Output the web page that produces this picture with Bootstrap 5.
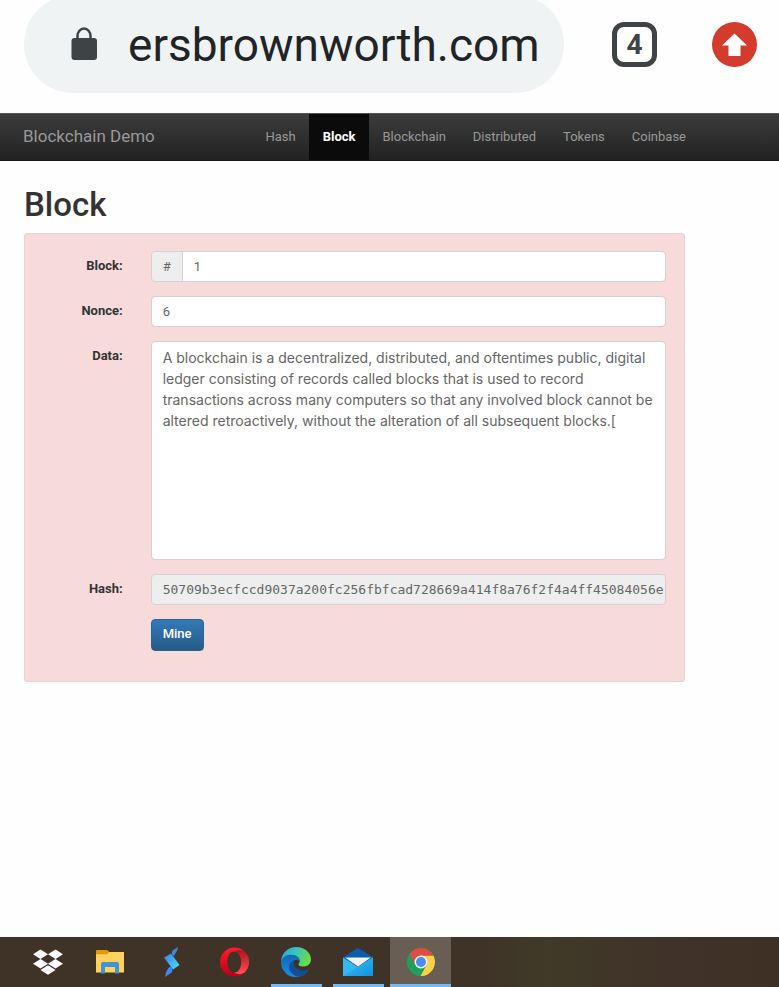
<!DOCTYPE html>
<html lang="en">
<head>
<meta charset="utf-8">
<meta name="viewport" content="width=device-width, initial-scale=1">
<title>Blockchain Demo</title>
<link href="https://cdn.jsdelivr.net/npm/bootstrap@5.3.0/dist/css/bootstrap.min.css" rel="stylesheet">
<style>
  body { font-family: Roboto, sans-serif; font-size: 13px; line-height: 20px; color: #333; background: #fefefe; }
  a { text-decoration: none; }

  /* browser bar */
  .browser-bar { height: 113px; padding: 0 22px 0 24px; }
  .address { flex: 0 1 540px; min-width: 0; height: 98px; margin-top: -5px; padding: 0 20px 0 46px; gap: 30px; background: #eff3f4; border-radius: 49px; }
  .address input { width: 0; min-width: 0; padding: 2px 0 0; border: 0; background: transparent; color: #202427; font-size: 46px; line-height: 58px; }
  .bar-actions { height: 88px; gap: 55px; }
  .tab-count { width: 45px; height: 45px; border: 5px solid #3e4346; border-radius: 12px; background: #fff; color: #3e4346; font-size: 28px; font-weight: 700; line-height: 35px; }

  /* site navigation */
  .site-nav { height: 48px; padding: 0 80px 0 23px; background: linear-gradient(#3c3c3c, #222); border-top: 1px solid #555; border-bottom: 1px solid #181818; }
  .site-nav .navbar-brand { color: #999; font-size: 17px; line-height: 22px; padding-bottom: 2px; }
  .site-nav .nav-link { padding: 0 13px 0 14px; line-height: 46px; color: #999; font-size: 13px; }
  .site-nav .nav-link.active { background: #0b0b0b; color: #fff; font-weight: 700; }

  /* block form */
  main { padding: 24px 94px 0 24px; }
  h1 { font-size: 33px; line-height: 40px; font-weight: 500; margin-bottom: 8px; }
  .block-well { padding: 17px 18px 30px 17px; background: #f7dbdb; border: 1px solid #e6d3d3; border-radius: 3px; }
  .block-well .row { --bs-gutter-x: 28px; margin-bottom: 14px; }
  .block-well .col-form-label { padding-top: 5px; padding-bottom: 0; font-size: 13px; font-weight: 700; text-align: right; }
  .block-well .form-control, .block-well .input-group-text { padding: 5px 11px; border-color: #dccfcf; border-radius: 4px; color: #666; font-size: 13px; line-height: 19px; }
  .block-well .input-group-text { background: #eee; }
  .block-well .input-group > :first-child { border-radius: 4px 0 0 4px; }
  .block-well .input-group > :last-child { border-radius: 0 4px 4px 0; }
  .block-well textarea.form-control { display: block; height: 219px; padding-right: 4px; font-family: Inter, sans-serif; font-size: 14px; line-height: 21px; resize: none; }
  .block-well .hash-value { padding-right: 1px; background: #eee; font-family: "DejaVu Sans Mono", monospace; }
  .btn-mine { padding: 4px 11px 6px; border: 1px solid #2d6390; border-radius: 4px; background: linear-gradient(#337ab7, #265a88); color: #fff; font-size: 13px; font-weight: 500; }

  /* taskbar */
  .taskbar { height: 50px; padding: 0 17px; background: linear-gradient(90deg, #3f3327 62%, #403a28 70%, #403228 85%, #3f3026); }
  .task { width: 62px; height: 50px; padding: 0; border: 0; background: transparent; }
  .task.running::after { content: ""; position: absolute; left: 6px; right: 5px; bottom: 0; height: 3px; background: #76b9ed; }
  .task.current { width: 61px; margin-left: 1px; background: #685e54; }
  .task.current::after { left: 0; right: 0; }
</style>
</head>
<body class="d-flex flex-column min-vh-100">

<header class="browser-bar d-flex justify-content-between align-items-start overflow-hidden">
  <div class="address d-flex align-items-center">
    <svg width="28" height="34" viewBox="0 0 28 34" class="flex-shrink-0" aria-hidden="true">
      <path d="M7.500 12V9a6.500 7.500 0 0 1 13 0v3" fill="none" stroke="#3e4345" stroke-width="2.500"/>
      <rect x="1.500" y="11" width="25.500" height="22" rx="3" fill="#3e4345"/>
    </svg>
    <input class="flex-grow-1" type="text" value="ersbrownworth.com" aria-label="Address">
  </div>
  <div class="bar-actions d-flex align-items-center">
    <button class="tab-count p-0" type="button" aria-label="4 open tabs">4</button>
    <button class="border-0 bg-transparent p-0 d-flex" type="button" aria-label="Update">
      <svg width="45" height="45" viewBox="0 0 45 45"><circle cx="22.500" cy="22.500" r="22.500" fill="#d33c2d"/><path d="M22.500 11.500 35 23.500h-6.500v10.500h-12V23.500H10z" fill="#fff"/></svg>
    </button>
  </div>
</header>

<nav class="site-nav d-flex justify-content-between">
  <a class="navbar-brand m-0 pt-0 align-self-center" href="#">Blockchain Demo</a>
  <ul class="nav flex-nowrap">
    <li class="nav-item"><a class="nav-link" href="#">Hash</a></li>
    <li class="nav-item"><a class="nav-link active" aria-current="page" href="#">Block</a></li>
    <li class="nav-item"><a class="nav-link" href="#">Blockchain</a></li>
    <li class="nav-item"><a class="nav-link" href="#">Distributed</a></li>
    <li class="nav-item"><a class="nav-link" href="#">Tokens</a></li>
    <li class="nav-item"><a class="nav-link" href="#">Coinbase</a></li>
  </ul>
</nav>

<main class="flex-grow-1">
  <h1>Block</h1>
  <form class="block-well">
    <div class="row">
      <label class="col-2 col-form-label" for="number">Block:</label>
      <div class="col-10">
        <div class="input-group">
          <span class="input-group-text">#</span>
          <input class="form-control" id="number" type="text" value="1">
        </div>
      </div>
    </div>
    <div class="row">
      <label class="col-2 col-form-label" for="nonce">Nonce:</label>
      <div class="col-10"><input class="form-control" id="nonce" type="text" value="6"></div>
    </div>
    <div class="row">
      <label class="col-2 col-form-label" for="data">Data:</label>
      <div class="col-10"><textarea class="form-control" id="data">A blockchain is a decentralized, distributed, and oftentimes public, digital ledger consisting of records called blocks that is used to record transactions across many computers so that any involved block cannot be altered retroactively, without the alteration of all subsequent blocks.[</textarea></div>
    </div>
    <div class="row">
      <label class="col-2 col-form-label" for="hash">Hash:</label>
      <div class="col-10"><input class="form-control hash-value" id="hash" type="text" readonly value="50709b3ecfccd9037a200fc256fbfcad728669a414f8a76f2f4a4ff45084056e"></div>
    </div>
    <div class="row mb-0">
      <div class="col-10 offset-2"><button class="btn btn-mine" type="button">Mine</button></div>
    </div>
  </form>
</main>

<footer class="taskbar d-flex">
  <button class="task d-flex align-items-center justify-content-center" type="button" aria-label="Dropbox">
    <svg width="30" height="26" viewBox="0 0 30 26" fill="#fff"><path d="M7.500.5 15 5.200 7.500 10 0 5.200zM22.500.5 30 5.200 22.500 10 15 5.200zM7.500 10 15 14.700 7.500 19.500 0 14.700zM22.500 10 30 14.700 22.500 19.500 15 14.700zM15 16.300 22.500 21 15 25.800 7.500 21z"/></svg>
  </button>
  <button class="task d-flex align-items-center justify-content-center" type="button" aria-label="File Explorer">
    <svg width="28" height="24" viewBox="0 0 28 24"><path d="M0 3Q0 2 1 2h27v20.500H0z" fill="#ffd25c"/><path d="M0 1q0-1 1-1h10l2.500 2L11 4.200H0z" fill="#e39a00"/><path d="M5 23.500V14q0-2 2-2h14q2 0 2 2v9.500h-4V17H9v6.500z" fill="#3d94d8"/></svg>
  </button>
  <button class="task d-flex align-items-center justify-content-center" type="button" aria-label="Stream">
    <svg width="16" height="30" viewBox="0 0 16 30"><defs><linearGradient id="bolt" x1="0" y1="0" x2="1" y2="1"><stop stop-color="#3c78f0"/><stop offset="1" stop-color="#42e8f5"/></linearGradient></defs><path d="M14 0 8.500 3.500Q7 6 9 9.500 13 6 14 0z" fill="#3c86dc"/><path d="M0 10.500 7 6.500 15.500 18 9 22.500z" fill="url(#bolt)"/><path d="M1 30 7.500 25.500Q9.500 23 6.500 19.500 2 22 1 30z" fill="#4187f2"/></svg>
  </button>
  <button class="task d-flex align-items-center justify-content-center" type="button" aria-label="Opera">
    <svg width="29" height="30" viewBox="0 0 29 30"><defs><linearGradient id="opera" x1="0" x2="0" y1="0" y2="1"><stop stop-color="#ff1b2d"/><stop offset="1" stop-color="#b80018"/></linearGradient><linearGradient id="operaSide" x1="0" x2="0" y1="0" y2="1"><stop stop-color="#b5101f"/><stop offset="1" stop-color="#ff5054"/></linearGradient></defs><path d="M14.500.5a14.500 14.500 0 1 0 0 29 14.500 14.500 0 0 0 0-29zM14.300 4.500c4.500 0 7 5 7 10.500s-2.500 10.500-7 10.500-7-5-7-10.500 2.500-10.500 7-10.500z" fill="url(#opera)" fill-rule="evenodd"/><path d="M14.300 4.500Q19 2 24 4.200 29 8.500 29 15t-5 11q-5 2.500-9.700-.5c4.500 0 7-5 7-10.500s-2.500-10.500-7-10.500z" fill="url(#operaSide)"/></svg>
  </button>
  <button class="task running position-relative d-flex align-items-center justify-content-center" type="button" aria-label="Edge">
    <svg width="30" height="30" viewBox="0 0 30 30"><defs><linearGradient id="wave" x1="0" x2="1" y1="0" y2=".3"><stop stop-color="#2d9fdf"/><stop offset=".5" stop-color="#35c4c2"/><stop offset="1" stop-color="#65dc4a"/></linearGradient><linearGradient id="sea" x1="0" x2="0" y1="0" y2="1"><stop stop-color="#1267b5"/><stop offset="1" stop-color="#168fe0"/></linearGradient></defs>
      <path d="M0 14C1 5 8 0 15 0c9 0 15 6 15 12.500 0 4.500-3.500 7-8 7-3.500 0-5-1.500-4.500-2.500 1-1.500 1.500-2 1-4C17 7 5 6 0 14z" fill="url(#wave)"/>
      <path d="M0 14C3 7 12 6 17 10q2 2 1.500 4-2-2-4.500-1-5 3-3 9t9 7.500Q17 30 15 30 7 30 3 24-.5 20 0 14z" fill="url(#sea)"/>
      <path d="M12 13.500Q6 17 9 24q3 5 9 6 6-1 9.500-6.500.5-1.500-1-.8-5 2.300-9.500-.2-6-3.500-3.500-9z" fill="#114f9c"/></svg>
  </button>
  <button class="task running position-relative d-flex align-items-center justify-content-center" type="button" aria-label="Mail">
    <svg width="30" height="28" viewBox="0 0 30 28"><defs><linearGradient id="mail" x1="0" x2="1" y1="0" y2="1"><stop stop-color="#39c3f1"/><stop offset="1" stop-color="#1491e3"/></linearGradient></defs><path d="M0 9 15 0l15 9v6H0z" fill="#0a5cad"/><path d="M0 9.500 15 19 30 9.500V28H0z" fill="#34b9ef"/><path d="M0 28 15 18.500 30 9.500V28z" fill="url(#mail)"/><path d="M2 9.500h26L15 18.500z" fill="#f2f2f2"/></svg>
  </button>
  <button class="task running current position-relative d-flex align-items-center justify-content-center" type="button" aria-label="Chrome">
    <svg width="28" height="28" viewBox="0 0 28 28"><circle cx="14" cy="14" r="14" fill="#1da05d"/><path d="M14 7.500h12.400A14 14 0 0 1 13.500 28l6-10.700z" fill="#ffcf45"/><path d="M2.600 6A14 14 0 0 1 26.400 7.500H14l-5.800 9.700z" fill="#de4d40"/><circle cx="14" cy="14" r="6.500" fill="#f3f3f3"/><circle cx="14" cy="14" r="5" fill="#4b8bf5"/></svg>
  </button>
</footer>

<script src="https://cdn.jsdelivr.net/npm/bootstrap@5.3.0/dist/js/bootstrap.bundle.min.js"></script>
</body>
</html>
